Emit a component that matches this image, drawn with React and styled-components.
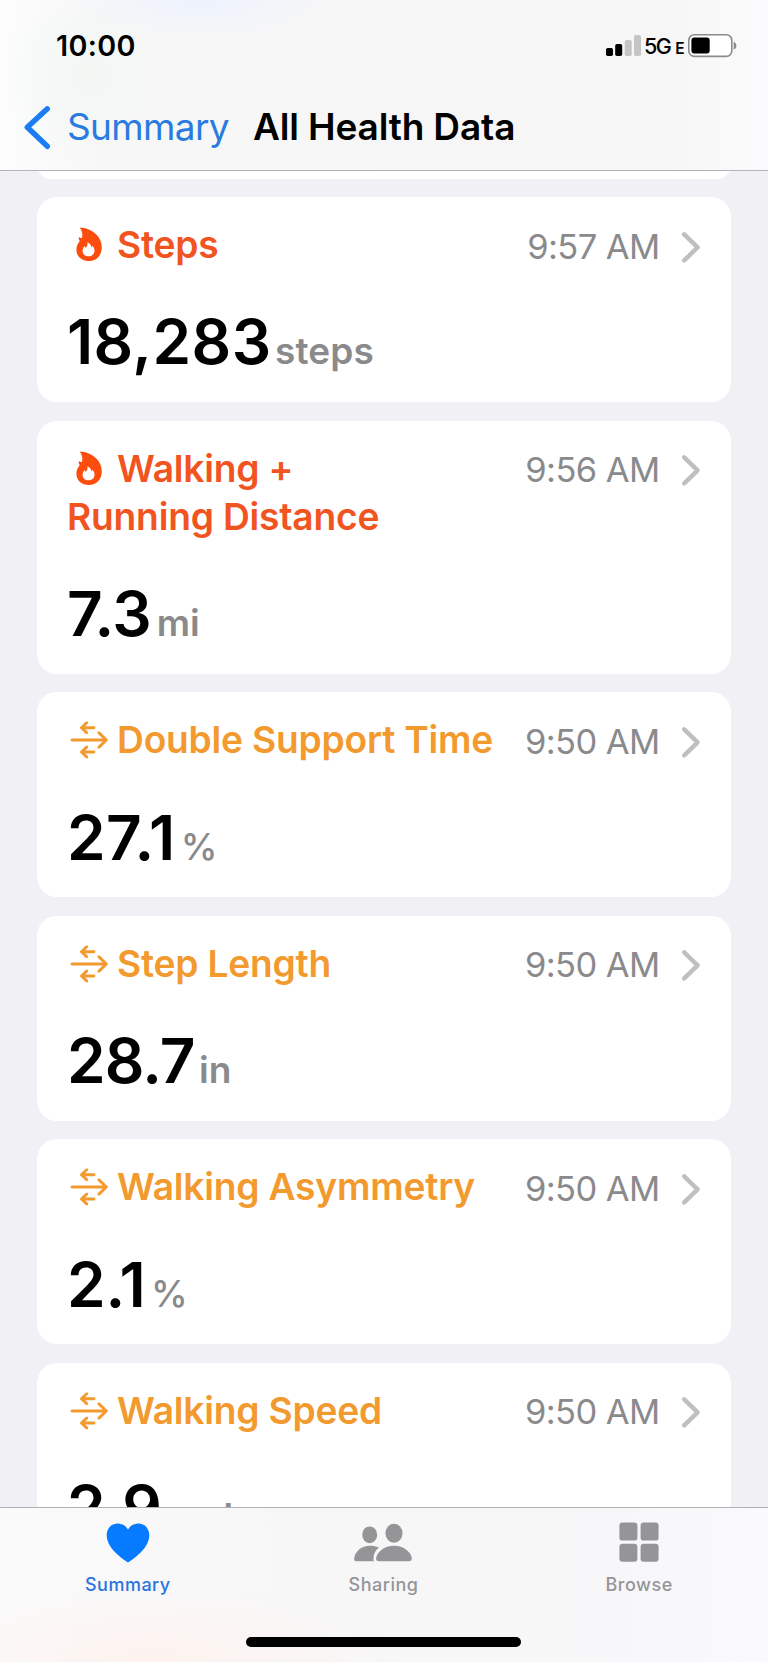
import React from "react";
import styled, { createGlobalStyle } from "styled-components";

const GlobalStyle = createGlobalStyle`
  *, *::before, *::after { box-sizing: border-box; }
  html, body { margin: 0; padding: 0; }
  body {
    background: #f0f0f5;
    color: #000;
    font-family: Inter, "Liberation Sans", sans-serif;
    overflow: hidden;
  }
  svg { display: block; flex: none; }
`;

const Screen = styled.div`
  display: flex;
  flex-direction: column;
  width: 768px;
  height: 1662px;
  overflow: hidden;
  background: #f0f0f5;
`;

const Header = styled.header`
  flex: none;
  height: 171px;
  border-bottom: 1px solid #b4b4b8;
  background:
    radial-gradient(ellipse 130px 40px at 200px 0, #edf2fd, transparent),
    radial-gradient(ellipse 90px 90px at 85px 75px, #f2f7f4, transparent),
    linear-gradient(90deg, #fdfdfe 0, #f7f7f7 100px, #f6f6f6 660px, #fbfbfd 768px);
`;

const StatusBar = styled.div`
  display: flex;
  justify-content: space-between;
  height: 91px;
  padding: 28px 30.5px 0 56px;
`;

const Clock = styled.time`
  font-size: 28.7px;
  line-height: 36px;
  font-weight: 600;
  letter-spacing: 0.35px;
`;

const StatusIcons = styled.div`
  display: flex;
  height: 36px;
`;

const Network = styled.span`
  width: 46px;
  padding-left: 2.5px;
  font-size: 21.5px;
  line-height: 37px;
  font-weight: 500;
  letter-spacing: -1.6px;
  white-space: nowrap;
  small {
    margin-left: 5px;
    font-size: 15.5px;
    font-weight: 600;
  }
`;

const NavBar = styled.nav`
  display: flex;
  align-items: center;
  height: 72px;
  padding-left: 23px;
`;

const BackLabel = styled.a`
  width: 200px;
  padding-left: 14px;
  color: #2a7be0;
  font-size: 37px;
  line-height: 48px;
  letter-spacing: -0.65px;
`;

const PageTitle = styled.h1`
  margin: 0;
  font-size: 37px;
  line-height: 48px;
  font-weight: 600;
  letter-spacing: -0.15px;
  white-space: nowrap;
`;

const List = styled.main`
  flex: 1;
  min-height: 0;
  overflow: hidden;
  display: flex;
  flex-direction: column;
  gap: 18.7px;
  padding: 0 37.5px 0 37px;
`;

const PreviousCard = styled.div`
  flex: none;
  height: 28px;
  margin-top: -20.5px;
  border-radius: 20px;
  background: #fff;
`;

const Card = styled.section`
  flex: none;
  padding: 24px 30px 28.5px;
  border-radius: 20px;
  background: #fff;
`;

const CardHead = styled.div`
  display: flex;
  justify-content: space-between;
  align-items: flex-start;
`;

const CardTitle = styled.h2`
  margin: 0;
  color: ${(p) => p.$color};
  font-size: 37.2px;
  line-height: 48.3px;
  font-weight: 600;
  letter-spacing: -0.22px;
  white-space: nowrap;
  svg {
    display: inline-block;
    margin: 0 3px 0 1px;
    vertical-align: -7px;
  }
`;

const CardMeta = styled.div`
  display: flex;
  align-items: center;
  height: 48.3px;
  padding-top: 2.4px;
  color: #8a8a8d;
  font-size: 34.5px;
  line-height: 46px;
  letter-spacing: -0.6px;
  white-space: nowrap;
  svg { margin-left: 21px; }
`;

const Reading = styled.div`
  margin-top: 42px;
  height: 62px;
  font-size: 62px;
  line-height: 62px;
  font-weight: 600;
  letter-spacing: ${(p) => p.$spacing}px;
  white-space: nowrap;
`;

const Unit = styled.span`
  margin-left: ${(p) => p.$gap}px;
  color: #8a8a8d;
  font-size: 37px;
  font-weight: ${(p) => p.$weight};
  letter-spacing: 0.1px;
`;

const TabBar = styled.footer`
  flex: none;
  height: 155px;
  border-top: 1px solid #b0b0b3;
  background:
    radial-gradient(ellipse 260px 80px at 150px 154px, #fdf3ef, transparent),
    linear-gradient(90deg, #fafafb, #f7f7f8 40%, #f7f7f9 80%, #fafafc);
`;

const Tabs = styled.div`
  display: grid;
  grid-template-columns: repeat(3, 1fr);
  height: 129px;
  padding-right: 1px;
`;

const Tab = styled.a`
  display: flex;
  flex-direction: column;
  align-items: center;
  padding-top: 14px;
  color: ${(p) => (p.$active ? "#2a72dc" : "#959598")};
  font-size: 18px;
  line-height: 24px;
  font-weight: 500;
  letter-spacing: 0.5px;
  svg { margin-bottom: 9px; }
`;

const HomeIndicator = styled.div`
  width: 275px;
  height: 10px;
  margin: 0 0 0 246px;
  border-radius: 5px;
  background: #000;
`;

const ORANGE_RED = "#f1541f";
const ORANGE = "#f29a2e";

const SignalIcon = () => (
  <svg width="36" height="36" viewBox="0 0 36 36">
    <rect x="0" y="20" width="7" height="8" rx="1.8" />
    <rect x="9.2" y="16" width="7" height="12" rx="1.8" />
    <rect x="18.7" y="12" width="7" height="16" rx="1.8" fill="#c5c5c5" />
    <rect x="28" y="7" width="7" height="21" rx="1.8" fill="#c5c5c5" />
  </svg>
);

const BatteryIcon = () => (
  <svg width="50" height="36" viewBox="0 0 50 36">
    <rect x="0.8" y="6.8" width="43" height="21.6" rx="5.5" fill="#fff" stroke="#8c8c8c" strokeWidth="1.6" />
    <rect x="3.4" y="9.5" width="18.3" height="16" rx="3" />
    <path d="M45.7 13.7c3.6 1.3 3.6 6.7 0 8z" fill="#8c8c8c" />
  </svg>
);

const BackIcon = () => (
  <svg width="30" height="46" viewBox="0 0 30 46" fill="none" stroke="#1c7cf2" strokeWidth="5.4" strokeLinecap="round" strokeLinejoin="round">
    <path d="M24.3 4.8 4.3 23.3l20 19" />
  </svg>
);

const ChevronIcon = () => (
  <svg width="20" height="34" viewBox="0 0 20 34" fill="none" stroke="#bfbfc1" strokeWidth="4.4" strokeLinecap="round" strokeLinejoin="round">
    <path d="M3.2 4.4 16.6 17.4 3.2 30.4" />
  </svg>
);

const FlameIcon = () => (
  <svg width="46" height="40" viewBox="0 0 46 40" fill="#fc4d0f">
    <path
      fillRule="evenodd"
      d="M11.8 2.800C22.500 2.600 33.800 10.700 33.800 22.200c0 8.300-5.300 13.800-12.800 13.800-7.300 0-12.600-4.600-12.600-11.300 0-3.600 1.300-6.300 3.400-8.800-1.100-1.200-1.400-2.600-.8-4 .9.800 1.800 1.100 2.900 1C15 9.400 14.200 6 11.800 2.800zM19.400 17.200c.5 2.600-.2 4.100-1.600 5.600-.6-.4-.9-1-.9-1.700-1.500 1.400-2.300 3-2.300 4.900 0 3.200 2.500 5.300 5.900 5.300 3.500 0 6-2.200 6-5.500 0-2.100-.8-3.700-2.100-5.100-.1.800-.3 1.400-.8 1.800-.2-2.300-1.600-4.300-4.200-5.300z"
    />
  </svg>
);

const ArrowsIcon = () => (
  <svg width="46" height="40" viewBox="0 0 46 40" fill="none" stroke={ORANGE} strokeWidth="2.9" strokeLinecap="round" strokeLinejoin="round">
    <path d="M4 20h34.300M30.900 12.900 38.400 20l-7.500 7.100" />
    <path d="M26 7.700H13.700M18.700 2.800 13.400 7.700l5.300 4.900" />
    <path d="M26 32H13.700M18.700 27.100 13.400 32l5.300 4.900" />
  </svg>
);

const HeartIcon = () => (
  <svg width="44" height="42" viewBox="0 0 44 42" fill="#067bff">
    <path d="M22 40.600C11 33.200.7 23.700.7 13.400.7 6.500 5.200 1.500 11.600 1.500c4.700 0 8.300 2.300 10.400 6 2.100-3.700 5.700-6 10.400-6 6.400 0 10.900 5 10.900 11.900C43.300 23.700 33 33.200 22 40.600z" />
  </svg>
);

const PeopleIcon = () => (
  <svg width="58" height="42" viewBox="0 0 58 42" fill="#959598">
    <ellipse cx="15.700" cy="12.800" rx="7.500" ry="8.400" />
    <ellipse cx="40" cy="11.200" rx="8.500" ry="9.500" />
    <path d="M25 25.500c-4.200 3.300-6.200 8.200-5.200 13.700H2.600C.9 39.200.2 38.500.2 37 .2 31 6.500 23.800 15.700 23.800c3.600 0 6.700.6 9.300 1.700z" />
    <path d="M25.300 39.200c-2.200 0-3.200-.8-3.200-2.500 0-5 6.600-13 17.900-13s17.800 8 17.800 13c0 1.700-1 2.500-3.200 2.500z" />
  </svg>
);

const GridIcon = () => (
  <svg width="40" height="42" viewBox="0 0 40 42" fill="#959598">
    <rect x="0.400" y="0.600" width="18" height="18" rx="3.200" />
    <rect x="21.600" y="0.600" width="18" height="18" rx="3.200" />
    <rect x="0.400" y="21.700" width="18" height="18" rx="3.200" />
    <rect x="21.600" y="21.700" width="18" height="18" rx="3.200" />
  </svg>
);

const metrics = [
  { title: "Steps", kind: "activity", time: "9:57 AM", value: "18,283", spacing: 0.4, unit: "steps", gap: 3.6, weight: 600 },
  { title: "Walking +", second: "Running Distance", kind: "activity", time: "9:56 AM", value: "7.3", spacing: -0.5, unit: "mi", gap: 5.5, weight: 600 },
  { title: "Double Support Time", kind: "mobility", time: "9:50 AM", value: "27.1", spacing: 0.4, unit: "%", gap: 5, weight: 500 },
  { title: "Step Length", kind: "mobility", time: "9:50 AM", value: "28.7", spacing: -0.9, unit: "in", gap: 4.5, weight: 600 },
  { title: "Walking Asymmetry", kind: "mobility", time: "9:50 AM", value: "2.1", spacing: -0.2, unit: "%", gap: 5.5, weight: 500 },
  { title: "Walking Speed", kind: "mobility", time: "9:50 AM", value: "2.9", spacing: -1.2, unit: "mph", gap: 6, weight: 600 },
];

function MetricCard({ metric }) {
  const activity = metric.kind === "activity";
  return (
    <Card>
      <CardHead>
        <CardTitle $color={activity ? ORANGE_RED : ORANGE}>
          {activity ? <FlameIcon /> : <ArrowsIcon />}
          {metric.title}
          {metric.second && <><br />{metric.second}</>}
        </CardTitle>
        <CardMeta>
          {metric.time}
          <ChevronIcon />
        </CardMeta>
      </CardHead>
      <Reading $spacing={metric.spacing}>
        {metric.value}
        <Unit $gap={metric.gap} $weight={metric.weight}>{metric.unit}</Unit>
      </Reading>
    </Card>
  );
}

export default function App() {
  return (
    <Screen>
      <GlobalStyle />
      <Header>
        <StatusBar>
          <Clock>10:00</Clock>
          <StatusIcons>
            <SignalIcon />
            <Network>5G<small>E</small></Network>
            <BatteryIcon />
          </StatusIcons>
        </StatusBar>
        <NavBar>
          <BackIcon />
          <BackLabel>Summary</BackLabel>
          <PageTitle>All Health Data</PageTitle>
        </NavBar>
      </Header>
      <List>
        <PreviousCard />
        {metrics.map((m) => <MetricCard key={m.title} metric={m} />)}
      </List>
      <TabBar>
        <Tabs>
          <Tab $active><HeartIcon />Summary</Tab>
          <Tab><PeopleIcon />Sharing</Tab>
          <Tab><GridIcon />Browse</Tab>
        </Tabs>
        <HomeIndicator />
      </TabBar>
    </Screen>
  );
}
